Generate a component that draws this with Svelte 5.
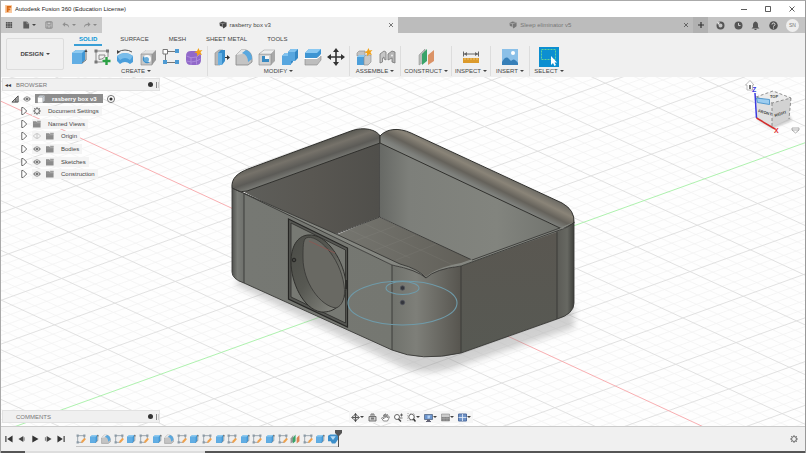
<script>
  const art = {
    extrude: '<path d="M2 5l4-3h9v10l-3 4H2z" fill="#3f97d5"/><path d="M2 5h10v11H2z" fill="#62aee4"/><path d="M2 5l4-3h9l-3 3z" fill="#8fcaf0"/><path d="M12 15l4-3V3" stroke="#777" fill="none"/><path d="M14.500 4L16 1l1.500 3z" fill="#444"/>',
    sketch: '<g fill="none" stroke="#8a8a8a"><path d="M2.500 3h12M3 2.500v12M2.500 14h7M15 3v6"/><path d="M6 11.500V7h6q0 4-6 4.500"/></g><path d="M1.500 1.500h3v3h-3zM13 1.500h3v3h-3zM1.500 12.500h3v3h-3z" fill="#777"/><path d="M13.500 9v8M9.500 13h8" stroke="#2ba044" stroke-width="2.400"/>',
    revolve: '<path d="M1 8q8-6 16 0v6l-3 2q-5-4-10 0l-3-3z" fill="#4a9edb"/><path d="M1 8q8-6 16 0l-3 4q-5-4-10 0z" fill="#7abdea"/><path d="M2 4q7-4 14 0" fill="none" stroke="#555"/><path d="M1 2v4l3-2z" fill="#444"/>',
    hole: '<path d="M2 6l5-4h10v10l-4 5H2z" fill="#999"/><path d="M2 6l5-4h10l-4 4z" fill="#e2e2e2"/><path d="M2 6h11v11H2z" fill="#c6c6c6" stroke="#888" stroke-width=".6"/><circle cx="8" cy="11" r="4" fill="#f8f8f8"/><path d="M5 8a4 4 0 0 0 6 6q-5 0-6-6" fill="#3c8fca"/><circle cx="7.500" cy="11.500" r="2.500" fill="#69aedb"/>',
    pattern: '<path d="M4 3.500h10M3.500 5v9M5 14.500h9" fill="none" stroke="#777"/><path d="M1 1.500h4.500V6H1z" fill="#fff" stroke="#777"/><path d="M13 1h4v4h-4zM1 12h4v4H1zM13 12h4v4h-4z" fill="#4e9bd3"/>',
    form: '<path d="M1 8q0-5 5-5h5q5 0 5 5v4q0 5-5 5H6q-5 0-5-5z" fill="#9168c9"/><path d="M1.500 8q4 3 10 1l4-3M6 9.500V17M11.500 9v7.500M1.500 13q5 2 10 0l4-2" stroke="#b394e0" stroke-width=".8" fill="none"/><path d="M13.500 0l1 2.500 3-.5-2 2.300 1.500 2.700-2.800-.8-2 2-.2-3-2.700-1 2.700-1.200z" fill="#f2a21b"/>',
    press: '<path d="M3 5l4-3h4v11l-3 4H3z" fill="#b8b8b8" stroke="#888" stroke-width=".6"/><path d="M6 5l3-3h4v11l-3 4H6z" fill="#378dcb"/><path d="M6 5h4v12H6z" fill="#66b1e5"/><path d="M13 9.500h3" stroke="#333"/><path d="M15 7l3 2.500-3 2.500z" fill="#333"/>',
    fillet: '<path d="M1 17V7l5-5h5q6 2 6 9v3l-4 3z" fill="#c4c4c4" stroke="#858585" stroke-width=".8"/><path d="M1 7l5-5h5L7 6z" fill="#e6e6e6"/><path d="M7 5l4-3q6 2 6 9l-4 3q0-7-6-9" fill="#59a8df"/>',
    shell: '<path d="M1 6l5-4h11v11l-4 4H1z" fill="#a8a8a8"/><path d="M1 6h12v11H1z" fill="#d2d2d2" stroke="#888" stroke-width=".6"/><path d="M1 6l5-4h11l-4 4z" fill="#eee" stroke="#999" stroke-width=".5"/><path d="M4 8h7v6H4z" fill="#f7f7f7"/><path d="M4 8h3v3h4v3H4z" fill="#398ac2"/>',
    combine: '<path d="M1 8l3-3h3V4l3-3h7v9l-3 3h-2v1l-3 3H1z" fill="#3588c5"/><path d="M1 8h6V4h7v9h-4v4H1z" fill="#57a6df"/><path d="M7 4l3-3h7l-3 3zM1 8l3-3h3v3z" fill="#82c3ef"/>',
    split: '<path d="M1 11l4-3h12v4l-4 5H1z" fill="#bdbdbd" stroke="#888" stroke-width=".6"/><path d="M1 5l4-4h12v5l-4 4H1z" fill="#3e95d3"/><path d="M1 5l4-4h12l-4 4z" fill="#8bc9f2"/><path d="M0 10.500h13l5-4" stroke="#fff" fill="none"/>',
    move: '<path d="M9 3v12M3 9h12" stroke="#333" stroke-width="1.600"/><path d="M9 0l3 4H6zM9 18l3-4H6zM0 9l4-3v6zM18 9l-4-3v6z" fill="#333"/>',
    component: '<path d="M2 5l2-2h6v5H2z" fill="#c2c2c2" stroke="#888" stroke-width=".6"/><path d="M2 9h7v8H2z" fill="#4c9fda"/><path d="M9 9l2-2h5v7l-3 3H9z" fill="#c8c8c8" stroke="#888" stroke-width=".6"/><path d="M2 9l2-2h6L9 9z" fill="#8bc9f2"/><path d="M13.500 0l1 2.500 3-.5-2 2.300 1.500 2.700-2.800-.8-2 2-.2-3-2.700-1 2.700-1.200z" fill="#f2a21b"/>',
    joint: '<path d="M2 15V6l4-3 2 1v8l-2-1V9L4.500 10v4z" fill="#c6c6c6" stroke="#777" stroke-width=".8"/><path d="M10 12V6l4-3 3 1v11l-3-1v-4l-2 1z" fill="#b4b4b4" stroke="#777" stroke-width=".8"/><circle cx="14" cy="7.500" r="1" fill="#eee"/>',
    plane: '<path d="M2 7l6-6v12l-6 4z" fill="#b9bdb9" stroke="#888" stroke-width=".5"/><path d="M5 6l5-5v12l-5 4z" fill="#38a368"/><path d="M11 7l6-5v11l-6 4z" fill="#db9367"/>',
    measure: '<path d="M1 10h16v5H1z" fill="#dc9a2b"/><path d="M3 10v2M6 10v2M9 10v2M12 10v2M15 10v2" stroke="#f3cf85" stroke-width=".8"/><path d="M2 6h14M1.500 3.500v5M16.500 3.500v5" stroke="#666"/><path d="M2 6l3-2v4zM16 6l-3-2v4z" fill="#666"/>',
    insert: '<path d="M1 1h16v16H1z" fill="#8bc0e8"/><path d="M1 14q4-7 7-3l2 2q3-4 7 2v2H1z" fill="#367fb8"/><circle cx="12" cy="5" r="2" fill="#fff"/>',
    pick: '<path d="M1.500 1.500h14v10h-14z" fill="none" stroke="#62d29b" stroke-dasharray="2 1"/><path d="M11 8v9l2-2 1.500 3 1.500-1-1.500-2.500H17z" fill="#fff"/>',
    grid: '<path d="M2 2h4v4H2zM7 2h4v4H7zM12 2h4v4h-4zM2 7h4v4H2zM7 7h4v4H7zM12 7h4v4h-4zM2 12h4v4H2zM7 12h4v4H7zM12 12h4v4h-4z" fill="#555"/>',
    file: '<path d="M3 1h8l5 5v11H3z" fill="#5c5c5c"/><path d="M11 1v5h5" fill="none" stroke="#ccc"/>',
    save: '<path d="M2 2h14v14H2z" fill="none" stroke="#888" stroke-width="2"/><path d="M5 2h8v6H5zM5 11h8v5H5z" fill="none" stroke="#888" stroke-width="1.500"/>',
    undo: '<path d="M7 2L1 8l6 5V9q6-1 9 6 0-9-9-9z" fill="#909090"/>',
    redo: '<path d="M11 2l6 6-6 5V9q-6-1-9 6 0-9 9-9z" fill="#909090"/>',
    cube: '<path d="M1 4l7-3 9 2v9l-7 5-2-4-6-2z" fill="currentColor"/><path d="M8 13V6l9-3M8 6L1 4" stroke="#ddd" fill="none"/>',
    ext: '<circle cx="9" cy="9" r="6" fill="none" stroke="#555" stroke-width="4"/><path d="M2 2l6 1-4 5z" fill="#eee"/>',
    clock: '<circle cx="9" cy="9" r="8" fill="#555"/><path d="M9 4v5h4" stroke="#ccc" stroke-width="2" fill="none"/>',
    bell: '<path d="M9 1q5 1 5 7v4l3 3H1l3-3V8q0-6 5-7" fill="#555"/><path d="M7 16h4v2H7z" fill="#555"/>',
    help: '<circle cx="9" cy="9" r="8.500" fill="#505050"/><path d="M6 7q0-3 3-3t3 3q0 2-3 3v1M9 13v2" stroke="#ddd" stroke-width="2" fill="none"/>',
    eye: '<path d="M0 9q9-12 18 0-9 12-18 0" fill="#8a8a8a"/><circle cx="9" cy="9" r="4.500" fill="#ddd"/><circle cx="9" cy="9" r="2.800" fill="#777"/>',
    eyeoff: '<path d="M1 9q8-11 16 0-8 11-16 0zM9 4v10" fill="none" stroke="#b5b5b5" stroke-width="1.600"/>',
    folder: '<path d="M0 3h7l2 2h8v12H0z" fill="#8b8b8b"/><path d="M9 2h8v2h-7zM1 7h16" stroke="#aaa" fill="#777"/>',
    gear: '<circle cx="9" cy="9" r="5.500" fill="none" stroke="#7a7a7a" stroke-width="2.500"/><path d="M9 0v4M9 14v4M0 9h4M14 9h4M2.500 2.500l3 3M12.500 12.500l3 3M15.500 2.500l-3 3M5.500 12.500l-3 3" stroke="#7a7a7a" stroke-width="2.200"/>',
    tri: '<path d="M4 1h3l8 8-8 8H4z" fill="#fff" stroke="#555" stroke-width="2"/>',
    open: '<path d="M16 2v14H2z" fill="#bbb" stroke="#444" stroke-width="2"/><path d="M11 8v8" stroke="#444" stroke-width="2"/>',
    body: '<path d="M2 5l4-4h11v11l-4 5H2z" fill="#c9d1d8"/><path d="M2 5h11v12H2z" fill="#fff"/><path d="M2 5h11v12M13 5l4-4" fill="none" stroke="#888"/>',
    target: '<circle cx="9" cy="9" r="8" fill="#fff" stroke="#555" stroke-width="1.800"/><circle cx="9" cy="9" r="3.500" fill="#333"/>',
    orbit: '<path d="M9 1v16M1 9h16" stroke="#555" stroke-width="2"/><ellipse cx="9" cy="9" rx="7" ry="4" fill="none" stroke="#777" stroke-width="2"/><path d="M9 0l3 4H6zM9 18l3-4H6z" fill="#444"/>',
    look: '<path d="M2 7h14v9H2zM4 4h10M6 2h6" fill="#ccc" stroke="#666" stroke-width="1.800"/><path d="M6 9h6v4H6z" fill="#777"/>',
    pan: '<path d="M5 16L1 10l2-1 3 3-1-8 2-1 1 6V2h2v7l2-6 2 1-1 6 3-3 1 1-4 8z" fill="#fff" stroke="#555" stroke-width="1.300"/>',
    zoom: '<circle cx="6" cy="8" r="5" fill="#fff" stroke="#555" stroke-width="1.800"/><path d="M9 12l5 5" stroke="#444" stroke-width="3"/><path d="M12 4h6M15 1v6M12 10h5" stroke="#444" stroke-width="1.500"/>',
    fit: '<path d="M1 1h14v14H1z" fill="none" stroke="#999" stroke-dasharray="3 2"/><circle cx="9" cy="8" r="5.500" fill="#fff" stroke="#555" stroke-width="1.800"/><path d="M13 12l4 5" stroke="#333" stroke-width="3"/>',
    display: '<path d="M1 3h16v10H1z" fill="#6c96d0" stroke="#50627c" stroke-width="1.500"/><path d="M6 13h6v3h2v2H4v-2h2z" fill="#667"/><path d="M7 5h6l-2 6H7z" fill="#b5d2f2"/>',
    ground: '<path d="M1 2h16v14H1z" fill="#ccc" stroke="#777"/><path d="M1 8h16v8H1z" fill="#858585"/><path d="M1 11h16M6 8v8M12 8v8" stroke="#aaa"/>',
    views: '<path d="M1 2h16v14H1z" fill="#6f93c8" stroke="#536f9e" stroke-width="2"/><path d="M9 2v14M1 9h16" stroke="#e8f0fa" stroke-width="1.600"/>',
    tsketch: '<path d="M3 3h12M3 3v12M3 15h9M15 3v7" fill="none" stroke="#73838f" stroke-width="1.200"/><path d="M1 1h4v4H1zM13 1h4v4h-4zM1 13h4v4H1z" fill="#8c9aa5"/><path d="M9 16l1-4 5-5 3 2-5 6z" fill="#efa14c"/>',
    tplane: '<path d="M1 8l5-6v12l-5 3z" fill="#999"/><path d="M5 7l5-6v12l-5 4z" fill="#38a368"/><path d="M12 7l5-5v11l-5 4z" fill="#db8355"/>',
    cut: '<path d="M0 3l4-2h14v9l-5 7H7l-2-4H0z" fill="#3d8fca"/><path d="M4 4h10l-5 7z" fill="#b6dbf4"/>',
    first: '<path d="M2 2v14" stroke="#333" stroke-width="2.500"/><path d="M17 1v16L5 9z" fill="#333"/>',
    prev: '<path d="M12 2L1 9l11 7z" fill="#444"/><path d="M12 5h3v8h-3z" fill="#888"/>',
    play: '<path d="M3 1l14 8-14 8z" fill="#333"/>',
    next: '<path d="M6 2l11 7-11 7z" fill="#444"/><path d="M2 5h3v8H2z" fill="#888"/>',
    last: '<path d="M16 2v14" stroke="#333" stroke-width="2.500"/><path d="M1 1v16l12-8z" fill="#333"/>',
  };

  const groups = [
    { name: 'CREATE', cls: 'wide', icons: ['extrude', 'sketch', 'revolve', 'hole', 'pattern', 'form'] },
    { name: 'MODIFY', cls: 'wide', icons: ['press', 'fillet', 'shell', 'combine', 'split', 'move'] },
    { name: 'ASSEMBLE', cls: 'mid', icons: ['component', 'joint'] },
    { name: 'CONSTRUCT', cls: 'mid', icons: ['plane'] },
    { name: 'INSPECT', cls: 'small', icons: ['measure'] },
    { name: 'INSERT', cls: 'small', icons: ['insert'] },
    { name: 'SELECT', cls: 'small', icons: ['pick'] },
  ];
  const modes = ['SOLID', 'SURFACE', 'MESH', 'SHEET METAL', 'TOOLS'];
  const tree = [
    { name: 'Document Settings', icons: ['gear'] },
    { name: 'Named Views', icons: ['folder'] },
    { name: 'Origin', icons: ['eyeoff', 'folder'] },
    { name: 'Bodies', icons: ['eye', 'folder'] },
    { name: 'Sketches', icons: ['eye', 'folder'] },
    { name: 'Construction', icons: ['eye', 'folder'] },
  ];
  const nav = [['orbit', 1], ['look', 0], ['pan', 0], ['zoom', 0], ['fit', 1], ['display', 1], ['ground', 1], ['views', 1]];
  const s = 'tsketch', e = 'extrude', f = 'fillet';
  const history = [s, e, f, s, e, s, e, f, s, e, s, e, s, e, s, e, s, 'tplane', s, e, 'cut'];

  // Ground grid: a lattice with two directions, five minor cells to a major one.
  const o = [615.3, 386], a = [60.4, -21.7], b = [53.2, 24.66];
  const lines = [];
  for (let i = -100; i <= 100; i++) {
    const k = i / 5;
    const line = (u, v, kind) => lines.push({
      kind,
      x1: o[0] + u[0] * k - v[0] * 30, y1: o[1] + u[1] * k - v[1] * 30,
      x2: o[0] + u[0] * k + v[0] * 30, y2: o[1] + u[1] * k + v[1] * 30,
    });
    const base = i % 5 === 0 ? 'major' : 'minor';
    line(a, b, i === 0 ? 'red' : base);
    line(b, a, i === -20 ? 'green' : base);
  }
  const order = ['minor', 'major', 'red', 'green'];
  lines.sort((p, q) => order.indexOf(p.kind) - order.indexOf(q.kind));
</script>

{#snippet icon(name)}
  <svg class="icon" viewBox="0 0 18 18" aria-hidden="true">{@html art[name]}</svg>
{/snippet}

<div class="app">
  <header class="title">
    <svg class="logo" viewBox="0 0 8 9" aria-hidden="true"><path d="M0 0h8v9H0z" fill="#f8c79c" /><path d="M2 1h5v2H4v1h2v2H4v2H2z" fill="#d96a16" /></svg>
    <h1>Autodesk Fusion 360 (Education License)</h1>
    <div class="win">
      <button aria-label="Minimize"><svg viewBox="0 0 8 8"><path d="M1 4.500h6" /></svg></button>
      <button aria-label="Maximize"><svg viewBox="0 0 8 8"><path d="M1.500 1.500h5v5h-5z" /></svg></button>
      <button aria-label="Close"><svg viewBox="0 0 8 8"><path d="M1.500 1.500l5 5M6.500 1.500l-5 5" /></svg></button>
    </div>
  </header>

  <div class="docs">
    <div class="quick">
      <button aria-label="Data panel">{@render icon('grid')}</button>
      <button class="drop" aria-label="File">{@render icon('file')}<i class="caret"></i></button>
      <button aria-label="Save">{@render icon('save')}</button>
      <button class="drop faint" aria-label="Undo">{@render icon('undo')}<i class="caret"></i></button>
      <button class="drop faint" aria-label="Redo">{@render icon('redo')}<i class="caret"></i></button>
    </div>
    <div class="doc active"><button class="name">{@render icon('cube')}rasberry box v3</button><button class="x" aria-label="Close tab"><svg viewBox="0 0 8 8"><path d="M2 2l4 4M6 2l-4 4" /></svg></button></div>
    <div class="doc"><button class="name">{@render icon('cube')}Sleep eliminator v5</button><button class="x" aria-label="Close tab"><svg viewBox="0 0 8 8"><path d="M2 2l4 4M6 2l-4 4" /></svg></button></div>
    <div class="account">
      <button class="plus" aria-label="New design"><svg viewBox="0 0 8 8"><path d="M4 1v6M1 4h6" /></svg></button>
      <button aria-label="Extensions">{@render icon('ext')}</button>
      <button aria-label="Job status">{@render icon('clock')}</button>
      <button aria-label="Notifications">{@render icon('bell')}</button>
      <button aria-label="Help">{@render icon('help')}</button>
      <button class="avatar">SN</button>
    </div>
  </div>

  <div class="ribbon">
    <button class="design">DESIGN<i class="caret"></i></button>
    <div class="tools">
      <nav class="modes">
        {#each modes as m, i}<button class:on={i === 0}>{m}</button>{/each}
      </nav>
      <div class="groups">
        {#each groups as g}
          <section class="group {g.cls}">
            <div class="set">
              {#each g.icons as n}<button class:picked={n === 'pick'} aria-label={n}>{@render icon(n)}</button>{/each}
            </div>
            <button class="label">{g.name}<i class="caret"></i></button>
          </section>
        {/each}
      </div>
    </div>
  </div>

  <main class="canvas">
    <svg class="scene" viewBox="0 77 806 349" preserveAspectRatio="xMidYMid slice" role="img" aria-label="Open box model on a ground grid">
      <defs>
        <filter id="soft" x="-10%" y="-20%" width="120%" height="140%"><feGaussianBlur stdDeviation="3" /></filter>
        <linearGradient id="lipL" gradientUnits="userSpaceOnUse" x1="296" y1="149" x2="305" y2="175">
          <stop offset="0" stop-color="#565650" /><stop offset=".3" stop-color="#76726a" /><stop offset=".6" stop-color="#5c5b57" /><stop offset=".85" stop-color="#7b7c77" /><stop offset="1" stop-color="#62625e" />
        </linearGradient>
        <linearGradient id="lipR" gradientUnits="userSpaceOnUse" x1="489" y1="168" x2="477" y2="192">
          <stop offset="0" stop-color="#706e67" /><stop offset=".25" stop-color="#8a8478" /><stop offset=".55" stop-color="#65625b" /><stop offset=".8" stop-color="#7d7f7b" /><stop offset="1" stop-color="#888a85" />
        </linearGradient>
        <linearGradient id="wallL" x1="0" y1="0" x2="1" y2="0"><stop offset="0" stop-color="#5e5e5a" /><stop offset=".5" stop-color="#595752" /><stop offset="1" stop-color="#504f4b" /></linearGradient>
        <linearGradient id="wallR" x1="0" y1="0" x2="1" y2="0"><stop offset="0" stop-color="#676965" /><stop offset=".15" stop-color="#7d7f7a" /><stop offset=".6" stop-color="#82847e" /><stop offset="1" stop-color="#6e706b" /></linearGradient>
        <linearGradient id="floor" x1="0" y1="0" x2="1" y2="0"><stop offset="0" stop-color="#767670" /><stop offset="1" stop-color="#615f58" /></linearGradient>
        <linearGradient id="cornerL" x1="0" y1="0" x2="1" y2="0"><stop offset="0" stop-color="#50514e" /><stop offset=".45" stop-color="#7b7d78" /><stop offset="1" stop-color="#6e706c" /></linearGradient>
        <linearGradient id="front" x1="0" y1="0" x2="1" y2="0"><stop offset="0" stop-color="#767873" /><stop offset="1" stop-color="#757771" /></linearGradient>
        <linearGradient id="cornerF" x1="0" y1="0" x2="1" y2="0"><stop offset="0" stop-color="#70726c" /><stop offset=".35" stop-color="#7e7f79" /><stop offset="1" stop-color="#57554f" /></linearGradient>
        <linearGradient id="side" x1="0" y1="0" x2="0" y2="1"><stop offset="0" stop-color="#5a5751" /><stop offset="1" stop-color="#575953" /></linearGradient>
        <linearGradient id="cornerR" x1="0" y1="0" x2="1" y2="0"><stop offset="0" stop-color="#5b5b56" /><stop offset=".6" stop-color="#676862" /><stop offset="1" stop-color="#3e3f3b" /></linearGradient>
        <linearGradient id="bore" x1="0" y1="0" x2="1" y2="1"><stop offset="0" stop-color="#4a4b46" /><stop offset=".45" stop-color="#575852" /><stop offset="1" stop-color="#8f9089" /></linearGradient>
      </defs>
      <path d="M0 77h806v349H0z" fill="#fefefe" />
      {#each lines as l}<line class={l.kind} x1={l.x1} y1={l.y1} x2={l.x2} y2={l.y2} />{/each}
      <path d="M234 284L400 366Q425 378 460 366L574 328V305L440 330L250 270Z" fill="#8d8d8d" opacity=".4" filter="url(#soft)" />

      <path d="M244 192L379 142V217L330 236Z" fill="url(#wallL)" />
      <path d="M380 142L560 228L574 223L472 261L380 217Z" fill="url(#wallR)" />
      <path d="M379 217L472 260L440 271L426 278L405 268L336 235Z" fill="url(#floor)" />
      <g stroke="#c3c1ba" stroke-width=".6" opacity=".12"><path d="M365 224l90 42M350 230l60 28M395 226l-40 15M415 235l-42 16M436 244l-40 16" /></g>
      <path class="edge" d="M379.500 135V217L472 260M379.500 217L336 234" fill="none" />

      <g stroke="#30302d">
        <path d="M232 188C231 178 238 173 248 169L351 131C364 126 377 130 380 136V143L247 191Q236 193 232 188Z" fill="url(#lipL)" />
        <path d="M380 136C386 129 398 127 411 133L562 203Q575 210 574 223Q568 228 560 228L380 143Z" fill="url(#lipR)" />
      </g>

      <path d="M232 188L244 194V283Q232 279 232 272Z" fill="url(#cornerL)" />
      <path d="M244 193L392 265V350L244 283Z" fill="url(#front)" />
      <path d="M392 265Q417 270 426 278Q435 269 461 266V353Q421 362 392 350Z" fill="url(#cornerF)" />
      <path d="M461 266L557 231V319L461 353Z" fill="url(#side)" />
      <path d="M557 231Q570 227 574 222V303Q574 314 557 319Z" fill="url(#cornerR)" />
      <path d="M233 188L336 234L400 264Q419 269 426 277Q435 268 461 263L557 229L574 222L557 232L461 266Q435 269 426 278Q417 270 392 265L245 194Z" fill="#858781" />
      <path class="edge" d="M232 188L336 234L400 264Q419 269 426 278M232 188L245 194L392 265Q417 270 426 278Q435 269 461 266L557 231Q570 227 574 222M472 260L560 228" fill="none" />
      <path class="edge" d="M232 188V272Q232 279 244 283L392 350Q421 362 461 353L557 319Q574 314 574 303V222M244 193V283M392 265V350M461 266V353M557 231V319" fill="none" />

      <path d="M288.500 219L347.500 248V327L288.500 299Z" fill="#565753" stroke="#262624" stroke-width="1.200" />
      <path d="M291 223L345.500 250V323L291 297Z" fill="#777973" stroke="#2c2c29" stroke-width=".8" />
      <path d="M308 235C327 233 345 262 346 285C346 303 335 313 321 312C303 309 291 282 291 262C291 247 297 236 308 235Z" fill="url(#bore)" stroke="#30302d" />
      <path d="M306 238C317 233 340 257 344 285C346 298 342 306 336 308C320 306 303 282 303 258C303 247 303 240 306 238Z" fill="#696963" stroke="#363633" stroke-width=".8" />
      <path d="M309 241L335 253" stroke="#8f5550" stroke-width=".8" />
      <circle cx="294" cy="260" r="1.800" fill="#454542" stroke="#242422" /><path d="M346 280v9" stroke="#242422" stroke-width="1.500" />

      <g fill="none" stroke="#6f9baa" stroke-width="1.100"><ellipse cx="402.500" cy="303" rx="54.500" ry="22" /><ellipse cx="402.500" cy="288" rx="16.500" ry="6.500" /></g>
      <g fill="#34363c" stroke="#53565e" stroke-width=".8"><circle cx="402.500" cy="288" r="2.200" /><circle cx="402.500" cy="302.500" r="2.200" /></g>
    </svg>

    <div class="panel browser">
      <button class="bar"><span class="rew">◂◂</span>BROWSER<i class="dot"></i><i class="grip"></i></button>
      <ul>
        <li class="root">
          <button aria-label="Collapse">{@render icon('open')}</button>{@render icon('eye')}
          <button class="chip">{@render icon('body')}rasberry box v3</button>{@render icon('target')}
        </li>
        {#each tree as t}
          <li><button aria-label="Expand {t.name}">{@render icon('tri')}</button><button class="node">{#each t.icons as n}{@render icon(n)}{/each}<span>{t.name}</span></button></li>
        {/each}
      </ul>
    </div>

    <svg class="viewcube" viewBox="0 0 62 62" role="img" aria-label="View cube">
      <defs><filter id="cubeShade"><feGaussianBlur stdDeviation="1.500" /></filter></defs>
      <path d="M14 41l15 9 20-8-5-6z" fill="#888" opacity=".6" filter="url(#cubeShade)" />
      <path d="M13 19L30 13L48 20L29 25Z" fill="#ececec" /><path d="M13 19L29 25V49L14 40Z" fill="#e0e0e0" /><path d="M29 25L48 20L46 41L29 49Z" fill="#d2d2d2" />
      <path d="M13 19L30 13L48 20L29 25ZM29 25V49M48 20L46 41" fill="none" stroke="#777" stroke-width=".8" stroke-dasharray="3 2" />
      <path d="M13.500 20l13 1.500v5l-12-2z" fill="#9ccdf0" stroke="#3b8bc8" stroke-width=".8" />
      <text x="15" y="34" transform="rotate(16 15 34)">FRONT</text><text x="32" y="39" transform="rotate(-18 32 39)">RIGHT</text><text class="tiny" x="27" y="20">TOP</text>
      <path d="M12 15L13.500 40" stroke="#3b3be0" stroke-width="1.500" /><path d="M13.500 40L32 51" stroke="#d42c2c" stroke-width="1.500" />
      <text class="z" x="9" y="14">Z</text><text class="xx" x="31" y="55">X</text>
      <path d="M2.500 7L7 2.500L11 7H9.500V12H4V7Z" fill="#fff" stroke="#aaa" stroke-width=".8" /><path d="M7 7v4" stroke="#444" stroke-width="1.500" />
      <path d="M49 50h7v2l-3.500 3L49 52zM49 52h7" fill="#fff" stroke="#999" stroke-width=".8" />
    </svg>

    <div class="panel comments"><button class="bar"><span class="rew"></span>COMMENTS<i class="dot"></i><i class="grip"></i></button></div>

    <div class="nav">
      {#each nav as [n, d]}<button aria-label={n}>{@render icon(n)}{#if d}<i class="caret"></i>{/if}</button>{/each}
    </div>
  </main>

  <footer class="timeline">
    <div class="play">
      {#each ['first', 'prev', 'play', 'next', 'last'] as n}<button aria-label={n}>{@render icon(n)}</button>{/each}
    </div>
    <div class="history">
      {#each history as n}<button aria-label="Feature {n}">{@render icon(n)}</button>{/each}
      <svg class="marker" viewBox="0 0 7 17" aria-hidden="true"><path d="M0 0h7v3L4 6v11H3V6L0 3z" fill="#555" /></svg>
    </div>
    <button class="settings" aria-label="Timeline settings">{@render icon('gear')}</button>
  </footer>
  <div class="edgebar"><i></i></div>
</div>

<style>
  :global(body) { margin: 0; }
  .app { min-height: 100vh; display: flex; flex-direction: column; box-sizing: border-box; border-top: 1px solid #aaa; border-left: 1px solid #aaa; border-right: 1px solid #999; background: #f0f0f0; font: 6px/8px "Liberation Sans", Arial, sans-serif; color: #444; overflow: hidden; }
  button { border: 0; padding: 0; margin: 0; background: none; font: inherit; color: inherit; display: flex; align-items: center; justify-content: center; white-space: nowrap; }
  h1 { font: inherit; margin: 0; color: #222; }
  svg { display: block; flex: none; }
  .icon { width: 8px; height: 8px; }
  .caret { border: 2px solid transparent; border-top: 2px solid #444; border-bottom: 0; margin-left: 2px; }

  .title { height: 16px; background: #fff; display: flex; align-items: center; padding-left: 4px; gap: 3px; }
  .logo { width: 7px; height: 8px; }
  .win { margin-left: auto; display: flex; gap: 16px; padding-right: 9px; }
  .win svg, .x svg, .plus svg { width: 8px; height: 8px; fill: none; stroke: #333; stroke-width: .8; }

  .docs { height: 16px; display: flex; background: #bcbcbc; }
  .quick { width: 101px; display: flex; align-items: center; background: #c9c9c9; padding-left: 4px; box-sizing: border-box; gap: 9px; }
  .drop + .drop { margin-left: -2px; }
  .faint .caret { border-top-color: #888; }
  .doc { flex: 1; display: flex; align-items: center; color: #777; }
  .name { flex: 1; gap: 3px; padding-left: 4px; }
  .active { background: #f0f0f0; color: #444; }
  .x { padding: 0 3px; }
  .x svg { opacity: .8; }
  .account { width: 112px; display: flex; align-items: center; justify-content: space-between; background: #c4c4c4; padding-right: 6px; box-sizing: border-box; }
  .account .icon { width: 9px; height: 9px; }
  .plus { width: 15px; height: 16px; background: #b1b1b1; }
  .plus svg { stroke-width: 1.2; }
  .avatar { width: 13px; height: 13px; border-radius: 50%; background: #eee; font-size: 5px; color: #777; }

  .ribbon { height: 44px; display: flex; align-items: flex-start; background: #f0f0f0; }
  .design { width: 58px; height: 32px; margin: 5px 0 0 5px; border: 1px solid #ddd; border-radius: 2px; font-weight: bold; }
  .tools { flex: 1; min-width: 0; }
  .modes { display: flex; height: 13px; gap: 20px; padding-left: 10px; align-items: stretch; }
  .modes button { box-sizing: border-box; padding-bottom: 2px; }
  .modes .on { color: #0696d7; font-weight: bold; border-bottom: 2px solid #3a9fd6; padding: 0 5px; margin-right: -2px; }
  .groups { display: flex; padding-left: 1px; }
  .group { height: 30px; display: flex; flex-direction: column; align-items: center; box-sizing: border-box; }
  .group + .group { border-left: 1px solid #ddd; }
  .wide { width: 142px; }
  .mid { width: 51px; }
  .small { width: 39px; }
  .set { display: flex; gap: 5px; height: 21px; align-items: center; }
  .set .icon { width: 18px; height: 18px; }
  .picked { background: #0c8fd1; width: 20px; height: 20px; }

  .canvas { flex: 1; position: relative; overflow: hidden; background: #fefefe; }
  .scene { position: absolute; width: 100%; height: 100%; }
  .minor { stroke: #f2f2f2; stroke-width: .8; }
  .major { stroke: #dedede; stroke-width: .9; }
  .red { stroke: #f7a5a8; stroke-width: .9; }
  .green { stroke: #a5efa5; stroke-width: .9; }
  .edge { stroke: #383835; stroke-width: .9; }

  .panel { position: absolute; left: 1px; width: 158px; }
  .browser { top: 1px; }
  .comments { bottom: 3px; }
  .bar { width: 100%; height: 13px; box-sizing: border-box; background: #f0f0f0; border: 1px solid #e2e2e2; justify-content: flex-start; color: #777; padding-left: 2px; }
  .rew { width: 11px; color: #333; text-align: left; }
  .dot { width: 5px; height: 5px; border-radius: 50%; background: #333; margin-left: auto; }
  .grip { height: 6px; width: 1px; border-left: 1px solid #888; border-right: 1px solid #ccc; margin-left: 3px; }
  ul { list-style: none; margin: 2px 0 0; padding: 0; height: 87px; display: flex; flex-direction: column; justify-content: space-between; }
  li { display: flex; align-items: center; height: 11px; padding-left: 18px; gap: 4px; }
  .root { padding-left: 9px; }
  .chip { background: #8d8d8d; color: #fff; font-weight: bold; height: 9px; width: 68px; gap: 7px; justify-content: flex-start; padding-left: 2px; }
  .node { background: #f4f4f4; height: 10px; padding: 0 3px 0 1px; gap: 5px; }
  .node span { padding-left: 2px; }

  .viewcube { position: absolute; right: 0; top: 1px; width: 62px; height: 62px; font-weight: bold; font-size: 4px; fill: #444; }
  .tiny { font-size: 4px; }
  .z { fill: #3b3be0; font-size: 7px; }
  .xx { fill: #e03030; font-size: 7px; }

  .nav { position: absolute; left: 50%; bottom: 3px; margin-left: -54px; height: 12px; display: flex; align-items: center; gap: 4px; background: #f6f6f6; padding: 0 2px; }
  .nav .icon { width: 9px; height: 9px; }
  .nav .caret { margin-left: 0; }

  .timeline { height: 24px; border-top: 1px solid #ccc; background: #f0f0f0; display: flex; align-items: center; padding: 0 7px 0 4px; }
  .play { display: flex; gap: 5px; }
  .history { position: relative; margin-left: 11px; width: 262px; height: 15px; display: flex; justify-content: space-between; align-items: flex-start; border-bottom: 1px solid #c4c4c4; }
  .history button { height: 15px; align-items: flex-start; padding-top: 3px; box-sizing: border-box; }
  .history .icon { width: 10px; height: 10px; }
  .marker { position: absolute; right: -4px; top: -1px; width: 7px; height: 17px; }
  .settings { margin-left: auto; }
  .edgebar { height: 2px; background: #555; padding-left: 24px; }
  .edgebar i { display: block; width: 180px; height: 2px; background: #ddd; }
</style>
